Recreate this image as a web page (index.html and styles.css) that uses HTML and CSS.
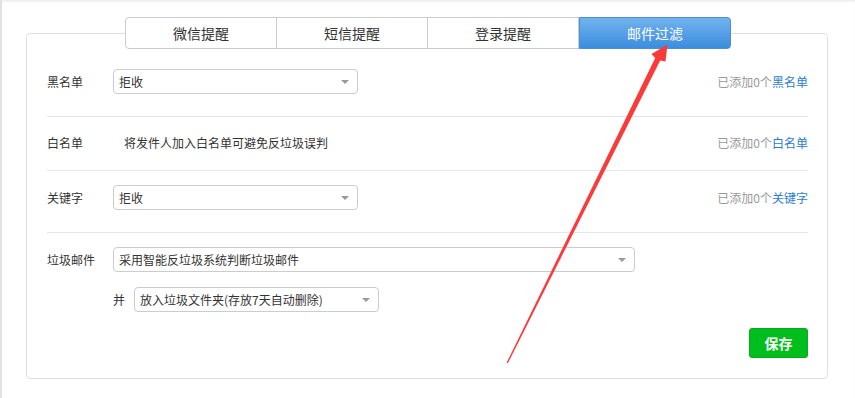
FILE: index.html
```html
<!DOCTYPE html>
<html>
<head>
    <meta charset="UTF-8">
    <title>邮件过滤</title>
    <link rel="stylesheet" href="styles.css">
</head>
<body>

<div class="panel">
    <div class="tabs">
        <div class="tab">微信提醒</div>
        <div class="tab">短信提醒</div>
        <div class="tab">登录提醒</div>
        <div class="tab active">邮件过滤</div>
    </div>

    <!-- 黑名单 -->
    <div class="row row-first">
        <div class="label">黑名单</div>
        <div class="select"><span>拒收</span></div>
        <div class="note">已添加0个<a href="#">黑名单</a></div>
    </div>

    <!-- 白名单 -->
    <div class="row row-text">
        <div class="label">白名单</div>
        <div class="hint">将发件人加入白名单可避免反垃圾误判</div>
        <div class="note">已添加0个<a href="#">白名单</a></div>
    </div>

    <!-- 关键字 -->
    <div class="row">
        <div class="label">关键字</div>
        <div class="select"><span>拒收</span></div>
        <div class="note">已添加0个<a href="#">关键字</a></div>
    </div>

    <!-- 垃圾邮件 -->
    <div class="spam">
        <div class="spam-line">
            <div class="label">垃圾邮件</div>
            <div class="select long"><span>采用智能反垃圾系统判断垃圾邮件</span></div>
        </div>
        <div class="spam-line sub">
            <div class="and">并</div>
            <div class="select"><span>放入垃圾文件夹(存放7天自动删除)</span></div>
        </div>
        <div class="actions">
            <div class="btn-save">保存</div>
        </div>
    </div>
</div>

<svg class="arrow" width="855" height="398" viewBox="0 0 855 398">
    <polygon points="506.5,363 655.2,58.1 651.5,54 667.5,44.5 665.5,61.5 660.2,60.5 508,363" fill="#fb3a3a"/>
</svg>

</body>
</html>
```

FILE: styles.css
```css
html, body {
    height: 100%;
}
body {
    margin: 0;
    font-family: "Noto Sans CJK SC", "Liberation Sans", sans-serif;
    font-size: 12px;
    color: #333;
    background-color: #fff;
    border-left: 2px solid #e2e2e2;
    box-shadow: inset 0 3px 3px -2px rgba(0, 0, 0, 0.1);
    box-sizing: border-box;
    padding-top: 33px;
    position: relative;
}
.panel {
    margin-left: 24px;
    width: 802px;
    height: 346px;
    border: 1px solid #e0e0e0;
    border-radius: 4px;
    box-sizing: border-box;
    padding: 0 19px 0 20px;
}
.tabs {
    display: flex;
    width: 606px;
    height: 32px;
    margin: -17px 0 0 78px;
    background-color: #fff;
    border: 1px solid #ccc;
    border-radius: 4px;
    box-sizing: border-box;
}
.tab {
    width: 151px;
    line-height: 30px;
    text-align: center;
    font-size: 14px;
    color: #333;
    border-right: 1px solid #ccc;
}
.tab:last-child {
    border-right: none;
}
.tab.active {
    width: 153px;
    margin: -1px -1px -1px 0;
    color: #fff;
    background: linear-gradient(#72b3ee, #3b8ddf);
    border: 1px solid #4b8fd6;
    border-radius: 0 4px 4px 0;
    box-sizing: border-box;
    line-height: 30px;
}
.row {
    display: flex;
    align-items: center;
    padding: 14px 0 22px;
    border-bottom: 1px solid #e5e5e5;
}
.row-first {
    padding-top: 20px;
}
.row-text {
    padding: 17px 0 18px;
    line-height: 18px;
}
.label {
    width: 66px;
    line-height: 18px;
}
.hint {
    margin-left: 11px;
}
.note {
    margin-left: auto;
    color: #999;
    line-height: 18px;
}
.note a {
    color: #2a7dd3;
    text-decoration: none;
}
.select {
    position: relative;
    width: 245px;
    height: 25px;
    line-height: 23px;
    padding-left: 5px;
    border: 1px solid #ccc;
    border-radius: 4px;
    box-sizing: border-box;
    color: #333;
}
.select::after {
    content: "";
    position: absolute;
    right: 8px;
    top: 10px;
    border-left: 4px solid transparent;
    border-right: 4px solid transparent;
    border-top: 4px solid #999;
}
.select.long {
    width: 522px;
}
.spam {
    padding-top: 14px;
}
.spam-line {
    display: flex;
    align-items: center;
}
.spam-line.sub {
    margin: 15px 0 0 66px;
}
.and {
    width: 21px;
}
.actions {
    display: flex;
    justify-content: flex-end;
    margin-top: 16px;
}
.btn-save {
    width: 59px;
    height: 30px;
    line-height: 28px;
    text-align: center;
    font-size: 14px;
    font-weight: bold;
    color: #fff;
    background-color: #00bf1c;
    border: 1px solid #0aa81c;
    border-radius: 3px;
    box-sizing: border-box;
}
.arrow {
    position: absolute;
    left: -2px;
    top: 0;
    pointer-events: none;
}
```
